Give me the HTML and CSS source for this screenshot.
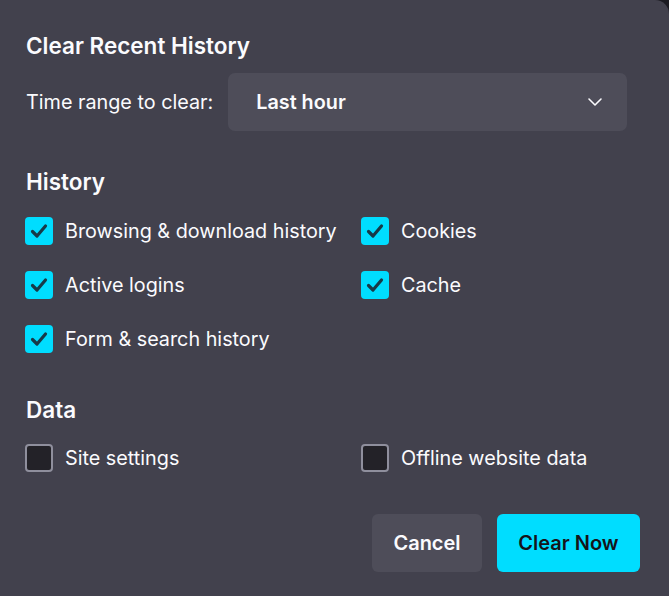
FILE: index.html
```html
<!DOCTYPE html>
<html lang="en">
<head>
  <meta charset="UTF-8">
  <title>Clear Recent History</title>
  <link rel="stylesheet" href="styles.css">
</head>
<body>

  <div class="dialog">
    <h2 class="title">Clear Recent History</h2>

    <div class="range">
      <span>Time range to clear:</span>
      <div class="select">
        <span>Last hour</span>
        <svg width="16" height="10" viewBox="0 0 16 10"><path d="M2 2l6 6 6-6" fill="none" stroke="#fbfbfe" stroke-width="1.6" stroke-linecap="round" stroke-linejoin="round"/></svg>
      </div>
    </div>

    <h3 class="section">History</h3>
    <div class="grid">
      <label class="check"><span class="box on"></span>Browsing &amp; download history</label>
      <label class="check"><span class="box on"></span>Cookies</label>
      <label class="check"><span class="box on"></span>Active logins</label>
      <label class="check"><span class="box on"></span>Cache</label>
      <label class="check"><span class="box on"></span>Form &amp; search history</label>
    </div>

    <h3 class="section data">Data</h3>
    <div class="grid">
      <label class="check"><span class="box"></span>Site settings</label>
      <label class="check"><span class="box"></span>Offline website data</label>
    </div>

    <div class="buttons">
      <button class="btn">Cancel</button>
      <button class="btn primary">Clear Now</button>
    </div>
  </div>

</body>
</html>
```

FILE: styles.css
```css
body { margin: 0; background: #1c1b22; font-family: Inter, "Noto Sans", sans-serif; color: #fbfbfe; }
.dialog {
  width: 669px;
  height: 596px;
  box-sizing: border-box;
  background: #42414d;
  border-top-right-radius: 14px;
  padding: 34px 29px 0 26px;
}
.title { margin: 0; font-size: 22.5px; line-height: 24px; font-weight: 600; }
.range { display: flex; align-items: center; gap: 15px; margin-top: 15px; font-size: 19.8px; }
.select {
  width: 399px;
  height: 58px;
  box-sizing: border-box;
  background: #4e4d59;
  border-radius: 7px;
  display: flex;
  align-items: center;
  justify-content: space-between;
  padding: 0 24px 0 28px;
  font-weight: 600;
}
.section { margin: 39px 0 0; font-size: 22.5px; line-height: 24px; font-weight: 600; }
.section.data { margin-top: 45px; }
.grid { display: grid; grid-template-columns: 336px auto; row-gap: 26px; margin-top: 23px; }
.section.data + .grid { margin-top: 22px; }
.check { display: flex; align-items: center; gap: 12px; font-size: 19.8px; height: 28px; margin-left: -1px; }
.box {
  width: 28px;
  height: 28px;
  box-sizing: border-box;
  border-radius: 4px;
  border: 2px solid #8f8f9d;
  background: #232228;
  flex: none;
}
.box.on {
  border: none;
  background: #00ddff url("data:image/svg+xml,%3Csvg xmlns='http://www.w3.org/2000/svg' width='28' height='28'%3E%3Cpath d='M7.5 14.5l4.5 4.5 8.5-10' fill='none' stroke='%23173a48' stroke-width='3.2' stroke-linecap='round' stroke-linejoin='round'/%3E%3C/svg%3E") center no-repeat;
}
.buttons { display: flex; justify-content: flex-end; gap: 15px; margin-top: 42px; }
.btn {
  height: 58px;
  border: none;
  border-radius: 6px;
  background: #4e4d59;
  color: #fbfbfe;
  font-family: inherit;
  font-size: 20px;
  font-weight: 600;
  width: 110px;
}
.btn.primary { background: #00ddff; color: #15141a; width: 143px; }
```
